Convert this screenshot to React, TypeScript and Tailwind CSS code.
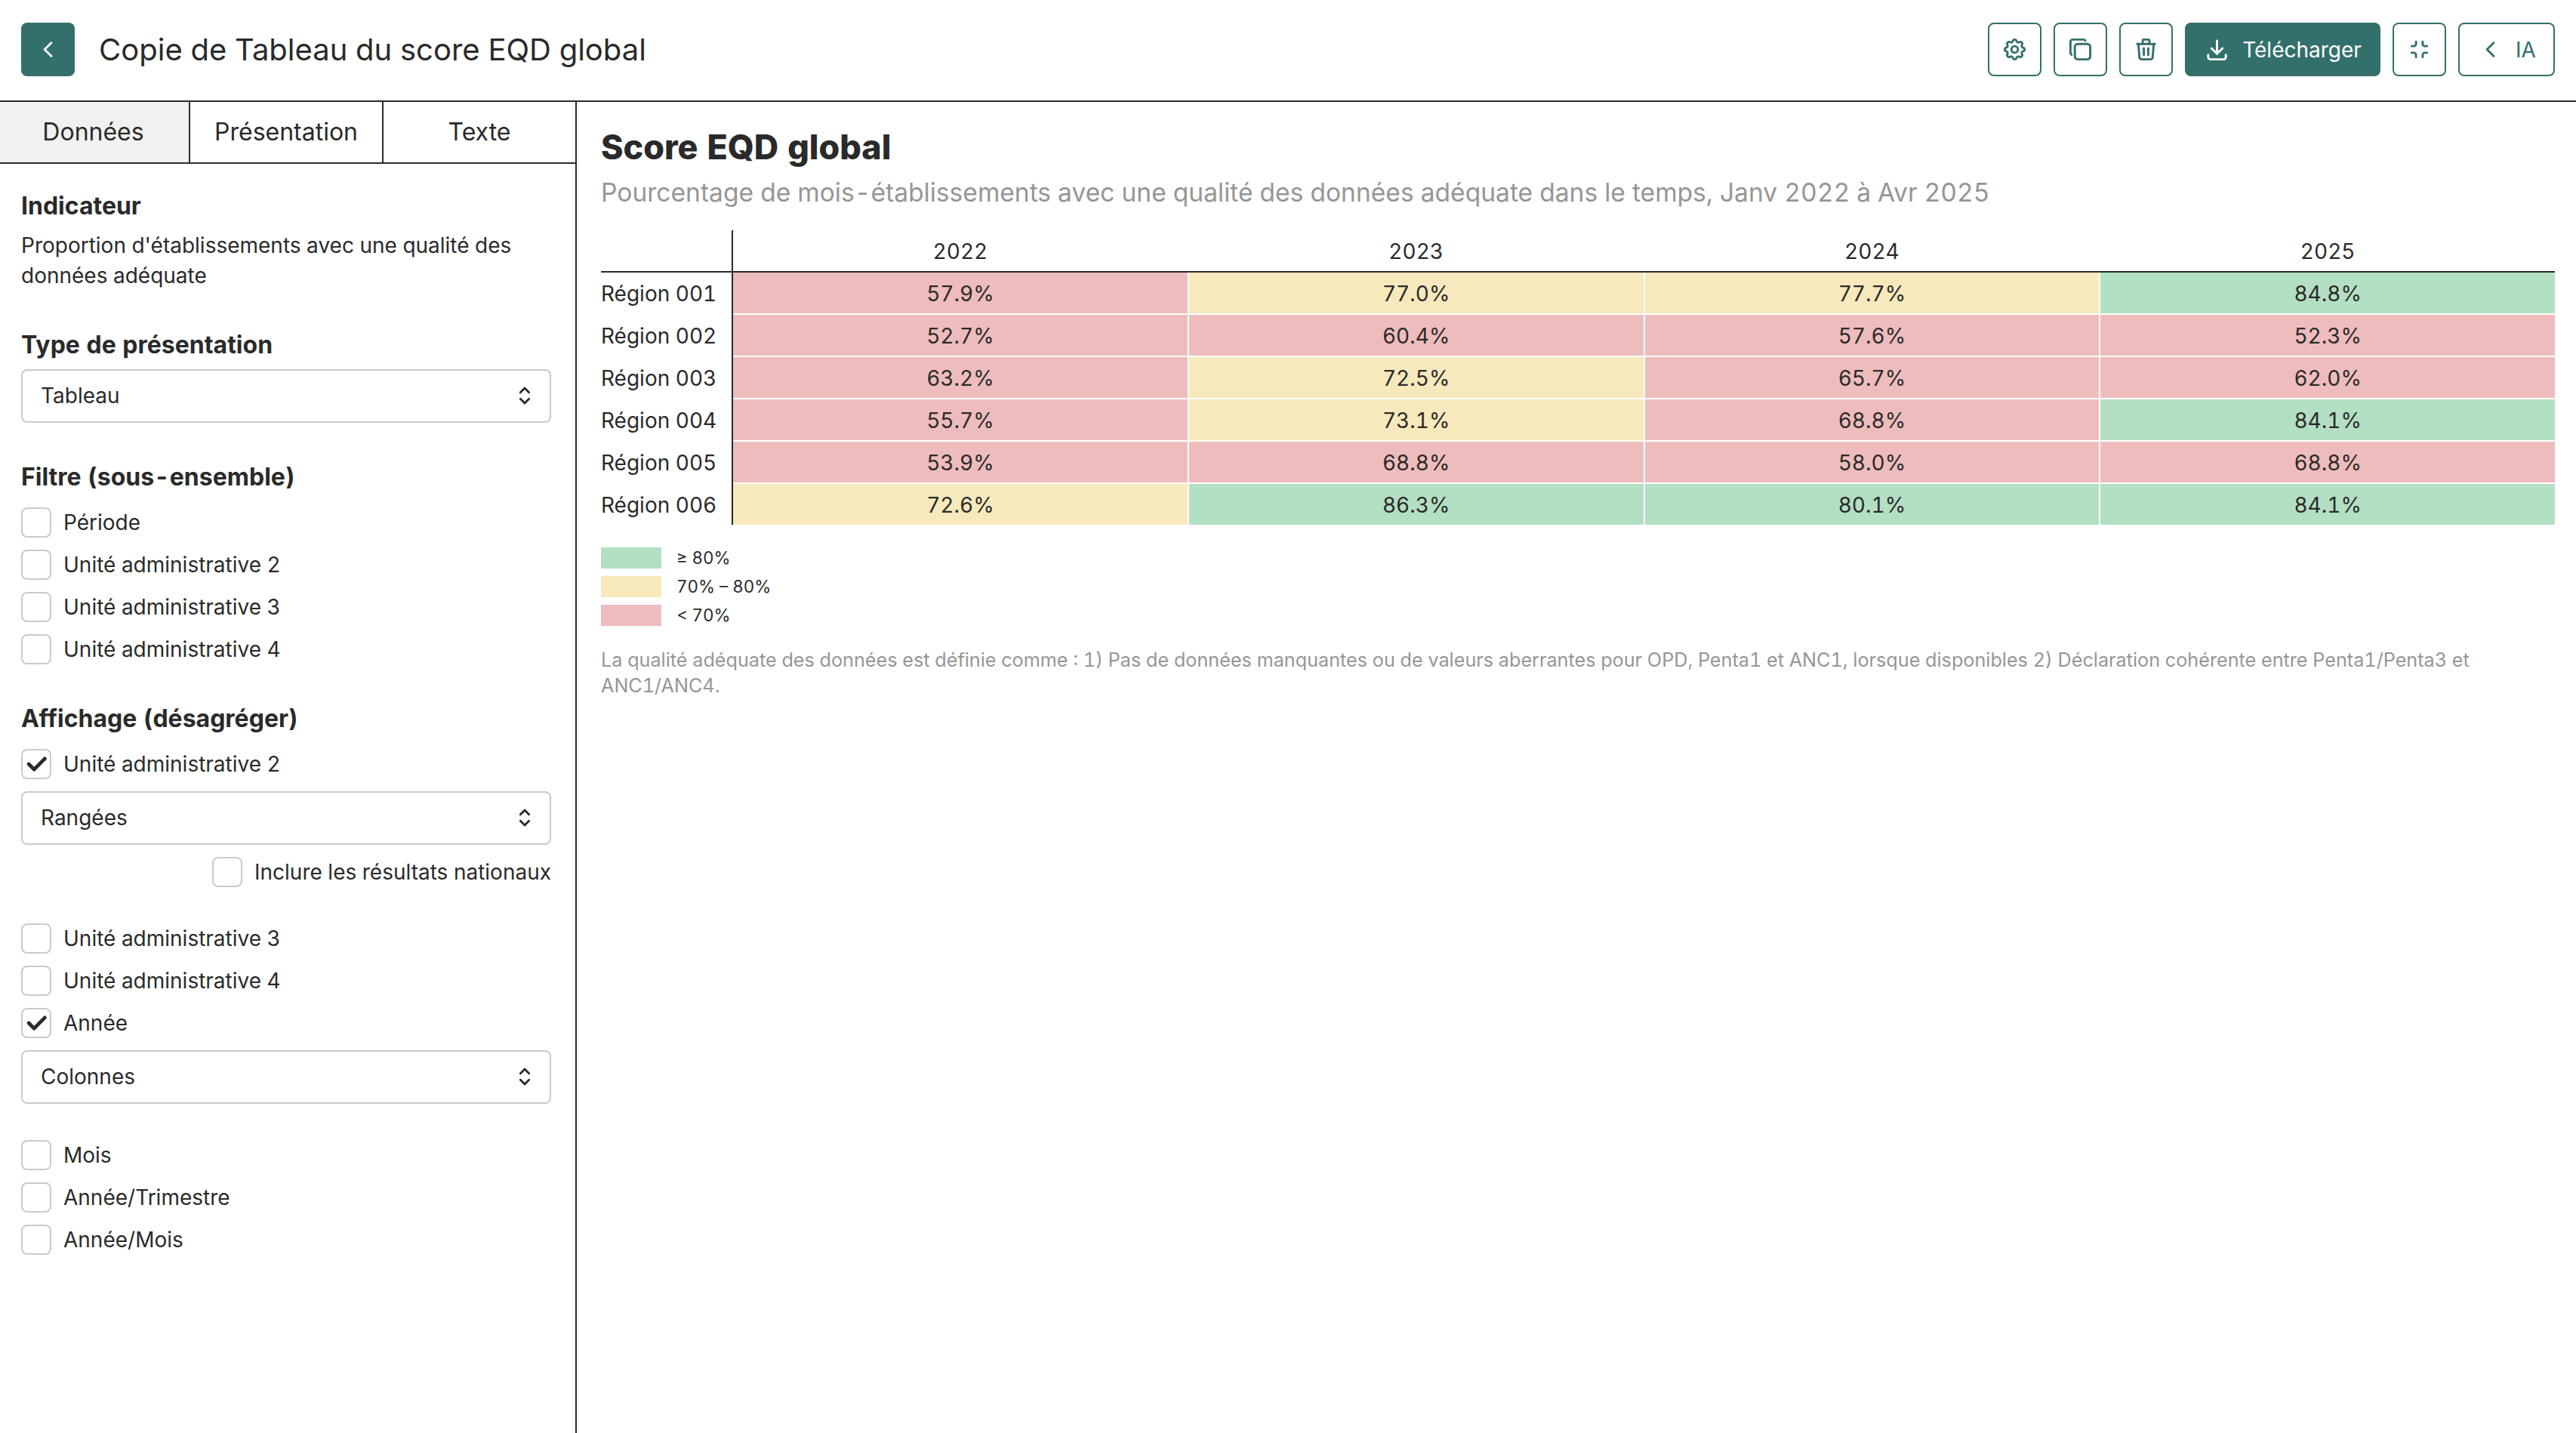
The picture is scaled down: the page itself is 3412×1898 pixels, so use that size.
import clsx from "clsx";
import type { ReactNode } from "react";
import {
  TbCheck,
  TbChevronLeft,
  TbCopy,
  TbDownload,
  TbMinimize,
  TbSelector,
  TbSettings,
  TbTrash,
} from "react-icons/tb";

const years = ["2022", "2023", "2024", "2025"];

const rows = [
  { region: "Région 001", values: [57.9, 77.0, 77.7, 84.8] },
  { region: "Région 002", values: [52.7, 60.4, 57.6, 52.3] },
  { region: "Région 003", values: [63.2, 72.5, 65.7, 62.0] },
  { region: "Région 004", values: [55.7, 73.1, 68.8, 84.1] },
  { region: "Région 005", values: [53.9, 68.8, 58.0, 68.8] },
  { region: "Région 006", values: [72.6, 86.3, 80.1, 84.1] },
];

const legend = [
  { label: "≥ 80%", color: "bg-[#b3dfc3]" },
  { label: "70% – 80%", color: "bg-[#f7e9bc]" },
  { label: "< 70%", color: "bg-[#eebcbc]" },
];

function cellColor(value: number) {
  if (value >= 80) return "bg-[#b3dfc3]";
  if (value >= 70) return "bg-[#f7e9bc]";
  return "bg-[#eebcbc]";
}

function OutlineButton({
  children,
  className,
}: {
  children: ReactNode;
  className?: string;
}) {
  return (
    <button
      className={clsx(
        "flex h-[71px] items-center justify-center rounded-lg border-2 border-[#33706c] text-[#33706c]",
        className ?? "w-[71px]"
      )}
    >
      {children}
    </button>
  );
}

function Checkbox({ label, checked }: { label: string; checked?: boolean }) {
  return (
    <label className="flex h-10 items-center gap-4">
      <span className="flex size-10 items-center justify-center rounded-lg border-2 border-[#cacaca]">
        {checked && <TbCheck size={34} strokeWidth={3.4} />}
      </span>
      <span>{label}</span>
    </label>
  );
}

function Select({ value }: { value: string }) {
  return (
    <div className="flex h-[71px] items-center justify-between rounded-lg border-2 border-[#cacaca] pr-4 pb-px pl-6">
      <span>{value}</span>
      <TbSelector size={34} />
    </div>
  );
}

function SectionTitle({ children }: { children: ReactNode }) {
  return <h3 className="text-[32px] leading-[40px] font-bold">{children}</h3>;
}

export default function App() {
  return (
    <div className="flex h-[1898px] w-[3412px] flex-col bg-white font-['Inter',sans-serif] text-[28px] leading-[40px] text-[#2a2a2a] tabular-nums">
      <header className="flex h-[135px] shrink-0 border-b-2 border-[#2a2a2a] px-7 pt-[30px]">
        <button className="flex size-[71px] items-center justify-center rounded-lg bg-[#33706c] text-white">
          <TbChevronLeft size={35} />
        </button>
        <h1 className="ml-8 flex-1 text-[40px] leading-[71px]">
          Copie de Tableau du score EQD global
        </h1>
        <div className="flex gap-4">
          <OutlineButton>
            <TbSettings size={35} />
          </OutlineButton>
          <OutlineButton>
            <TbCopy size={35} />
          </OutlineButton>
          <OutlineButton>
            <TbTrash size={35} />
          </OutlineButton>
          <button className="flex h-[71px] w-[259px] items-center justify-center gap-4 rounded-lg bg-[#33706c] text-white">
            <TbDownload size={35} />
            Télécharger
          </button>
          <OutlineButton>
            <TbMinimize size={35} />
          </OutlineButton>
          <OutlineButton className="w-32 gap-4">
            <TbChevronLeft size={35} />
            IA
          </OutlineButton>
        </div>
      </header>

      <div className="flex min-h-0 flex-1">
        <aside className="w-[764px] shrink-0 border-r-2 border-[#2a2a2a]">
          <nav className="flex h-[82px] border-b-2 border-[#2a2a2a] text-[32px]">
            <div className="flex w-[252px] items-center justify-center border-r-2 border-[#2a2a2a] bg-[#f1f1f1] pr-[3px]">
              Données
            </div>
            <div className="flex w-64 items-center justify-center border-r-2 border-[#2a2a2a]">
              Présentation
            </div>
            <div className="flex flex-1 items-center justify-center">Texte</div>
          </nav>

          <div className="pt-9 pr-8 pl-7">
            <SectionTitle>Indicateur</SectionTitle>
            <p className="mt-3">
              Proportion d'établissements avec une qualité des données adéquate
            </p>

            <div className="mt-13 mb-3">
              <SectionTitle>Type de présentation</SectionTitle>
            </div>
            <Select value="Tableau" />

            <div className="mt-13 mb-5">
              <SectionTitle>Filtre (sous-ensemble)</SectionTitle>
            </div>
            <div className="flex flex-col gap-4">
              <Checkbox label="Période" />
              <Checkbox label="Unité administrative 2" />
              <Checkbox label="Unité administrative 3" />
              <Checkbox label="Unité administrative 4" />
            </div>

            <div className="mt-13 mb-5">
              <SectionTitle>Affichage (désagréger)</SectionTitle>
            </div>
            <div className="flex flex-col gap-4">
              <Checkbox label="Unité administrative 2" checked />
              <Select value="Rangées" />
              <div className="flex justify-end">
                <Checkbox label="Inclure les résultats nationaux" />
              </div>
            </div>
            <div className="mt-12 flex flex-col gap-4">
              <Checkbox label="Unité administrative 3" />
              <Checkbox label="Unité administrative 4" />
              <Checkbox label="Année" checked />
              <Select value="Colonnes" />
            </div>
            <div className="mt-12 flex flex-col gap-4">
              <Checkbox label="Mois" />
              <Checkbox label="Année/Trimestre" />
              <Checkbox label="Année/Mois" />
            </div>
          </div>
        </aside>

        <main className="flex-1 pt-9 pr-7 pl-8">
          <h2 className="text-[44.8px] leading-[48px] font-extrabold">
            Score EQD global
          </h2>
          <p className="mt-3 text-[33.6px] leading-[48px] text-[#969696]">
            Pourcentage de mois-établissements avec une qualité des données
            adéquate dans le temps, Janv 2022 à Avr 2025
          </p>

          <div className="mt-[26px]">
            <div className="flex h-14 border-b-2 border-[#2a2a2a]">
              <div className="w-[175px] border-r-2 border-[#2a2a2a]" />
              <div className="grid flex-1 grid-cols-4 gap-x-0.5 text-center">
                {years.map((year) => (
                  <div key={year} className="pt-2">
                    {year}
                  </div>
                ))}
              </div>
            </div>
            <div className="flex flex-col">
              {rows.map(({ region, values }) => (
                <div key={region} className="group flex h-14 last:h-[54px]">
                  <div className="w-[175px] border-r-2 border-[#2a2a2a] leading-[56px]">
                    {region}
                  </div>
                  <div className="grid flex-1 grid-cols-4 gap-x-0.5 border-b-2 border-white group-last:border-b-0">
                    {values.map((value, i) => (
                      <div
                        key={years[i]}
                        className={clsx(
                          "flex items-center justify-center pt-0.5",
                          cellColor(value)
                        )}
                      >
                        {value.toFixed(1)}%
                      </div>
                    ))}
                  </div>
                </div>
              ))}
            </div>
          </div>

          <ul className="mt-[30px] flex flex-col gap-2.5 text-[22.4px] leading-[28px]">
            {legend.map(({ label, color }) => (
              <li key={label} className="flex items-center gap-5">
                <span className={clsx("h-7 w-20", color)} />
                {label}
              </li>
            ))}
          </ul>

          <p className="mt-7 text-[25.2px] leading-[34px] text-[#969696]">
            La qualité adéquate des données est définie comme : 1) Pas de
            données manquantes ou de valeurs aberrantes pour OPD, Penta1 et
            ANC1, lorsque disponibles 2) Déclaration cohérente entre
            Penta1/Penta3 et ANC1/ANC4.
          </p>
        </main>
      </div>
    </div>
  );
}
